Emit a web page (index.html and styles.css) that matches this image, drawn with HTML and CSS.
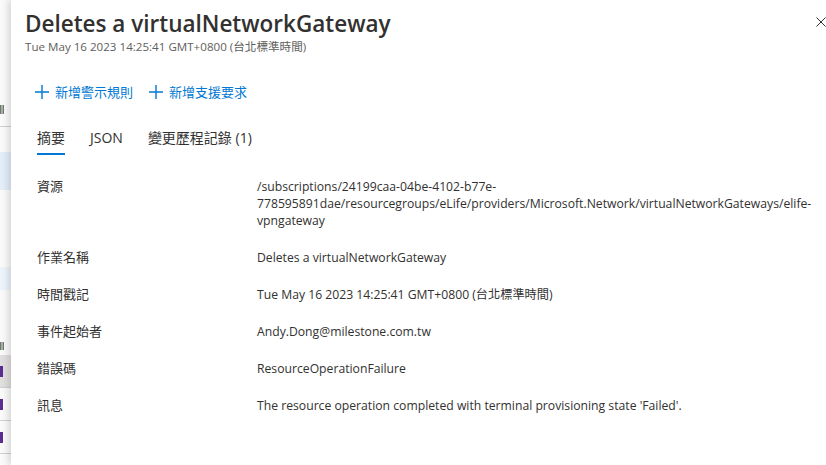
FILE: index.html
```html
<!DOCTYPE html>
<html lang="zh-Hant">
<head>
  <meta charset="UTF-8">
  <title>Deletes a virtualNetworkGateway</title>
  <link rel="stylesheet" href="styles.css">
</head>
<body>

  <!-- sliver of the page behind the blade -->
  <div class="behind">
    <div class="behind-icon behind-icon-top"></div>
    <div class="behind-rule"></div>
    <div class="behind-band"></div>
    <div class="behind-band behind-band-light"></div>
    <div class="behind-icon behind-icon-low"></div>
    <div class="behind-row behind-row-selected"><span></span></div>
    <div class="behind-row"><span></span></div>
    <div class="behind-row"><span></span></div>
  </div>

  <main class="panel">
    <header class="panel-header">
      <div>
        <h1 class="panel-title">Deletes a virtualNetworkGateway</h1>
        <div class="panel-subtitle">Tue May 16 2023 14:25:41 GMT+0800 (台北標準時間)</div>
      </div>
      <button class="close-btn" aria-label="關閉">
        <svg width="10" height="10" viewBox="0 0 10 10">
          <path d="M0.5 0.5 L9.5 9.5 M9.5 0.5 L0.5 9.5" stroke="#323130" stroke-width="1" fill="none"/>
        </svg>
      </button>
    </header>

    <div class="commands">
      <a href="#" class="command">
        <svg class="command-icon" width="14" height="14" viewBox="0 0 14 14">
          <path d="M7 0 V14 M0 7 H14" stroke="#0078d4" stroke-width="1.4" fill="none"/>
        </svg>
        新增警示規則
      </a>
      <a href="#" class="command">
        <svg class="command-icon" width="14" height="14" viewBox="0 0 14 14">
          <path d="M7 0 V14 M0 7 H14" stroke="#0078d4" stroke-width="1.4" fill="none"/>
        </svg>
        新增支援要求
      </a>
    </div>

    <nav class="tabs">
      <a href="#" class="tab active">摘要</a>
      <a href="#" class="tab">JSON</a>
      <a href="#" class="tab">變更歷程記錄 (1)</a>
    </nav>

    <dl class="details">
      <dt>資源</dt>
      <dd>/subscriptions/24199caa-04be-4102-b77e-<wbr>778595891dae/resourcegroups/eLife/providers/Microsoft.Network/virtualNetworkGateways/elife-<wbr>vpngateway</dd>

      <dt>作業名稱</dt>
      <dd>Deletes a virtualNetworkGateway</dd>

      <dt>時間戳記</dt>
      <dd>Tue May 16 2023 14:25:41 GMT+0800 (台北標準時間)</dd>

      <dt>事件起始者</dt>
      <dd>Andy.Dong@milestone.com.tw</dd>

      <dt>錯誤碼</dt>
      <dd>ResourceOperationFailure</dd>

      <dt>訊息</dt>
      <dd>The resource operation completed with terminal provisioning state 'Failed'.</dd>
    </dl>
  </main>

</body>
</html>
```

FILE: styles.css
```css
/* Reset */
* {
  margin: 0;
  padding: 0;
  box-sizing: border-box;
}

body {
  display: flex;
  height: 100vh;
  overflow: hidden;
  background: #fff;
  color: #323130;
  font-family: "Open Sans", "Noto Sans CJK TC", sans-serif;
}

/* Page behind the blade */
.behind {
  flex: 0 0 11px;
  background: #fafafa;
  overflow: hidden;
}

.behind-icon {
  width: 4px;
  height: 9px;
  background: linear-gradient(90deg, #2b88d8 0 1px, #e8a33d 1px 3px, #2b88d8 3px);
}

.behind-icon-top {
  margin-top: 105px;
}

.behind-rule {
  margin-top: 12px;
  height: 1px;
  background: #d2d0ce;
}

.behind-band {
  margin-top: 25px;
  height: 38px;
  background: #e3eef9;
}

.behind-band-light {
  margin-top: 77px;
  height: 23px;
  background: #edf4fb;
}

.behind-icon-low {
  margin-top: 52px;
  height: 8px;
}

.behind-row {
  display: flex;
  align-items: center;
  height: 33px;
  border-bottom: 1px solid #d2d0ce;
}

.behind-row-selected {
  margin-top: 5px;
  background: #e1dfdd;
}

.behind-row span {
  width: 3px;
  height: 11px;
  background: #5c2d91;
}

/* Blade */
.panel {
  flex: 1;
  min-width: 0;
  padding: 8px 0 0 14px;
  background: #fff;
  box-shadow: -3px 0 7px rgba(0, 0, 0, 0.14);
  position: relative;
}

.panel-header {
  display: flex;
  justify-content: space-between;
  align-items: flex-start;
}

.panel-title {
  font-size: 22.5px;
  line-height: 31px;
  font-weight: 600;
  color: #323130;
}

.panel-subtitle {
  font-size: 11.6px;
  line-height: 16px;
  color: #605e5c;
}

.close-btn {
  display: flex;
  width: 10px;
  height: 10px;
  margin-top: 9px;
  border: none;
  background: none;
  cursor: pointer;
}

/* Command bar */
.commands {
  display: flex;
  gap: 16px;
  margin-top: 27px;
  padding-left: 10px;
}

.command {
  display: flex;
  align-items: center;
  gap: 6px;
  font-size: 13px;
  line-height: 20px;
  color: #0078d4;
  text-decoration: none;
}

/* Tabs */
.tabs {
  display: flex;
  gap: 25px;
  margin-top: 26px;
  padding-left: 12px;
}

.tab {
  padding-bottom: 5px;
  border-bottom: 2px solid transparent;
  font-size: 14px;
  line-height: 20px;
  color: #323130;
  text-decoration: none;
}

.tab.active {
  border-bottom-color: #0078d4;
}

/* Summary list */
.details {
  display: grid;
  grid-template-columns: 220px 1fr;
  margin-top: 13px;
  padding-left: 12px;
  font-size: 13px;
  line-height: 17px;
}

.details dt,
.details dd {
  padding: 10px 0;
}

.details dd {
  font-size: 12.2px;
}
```
